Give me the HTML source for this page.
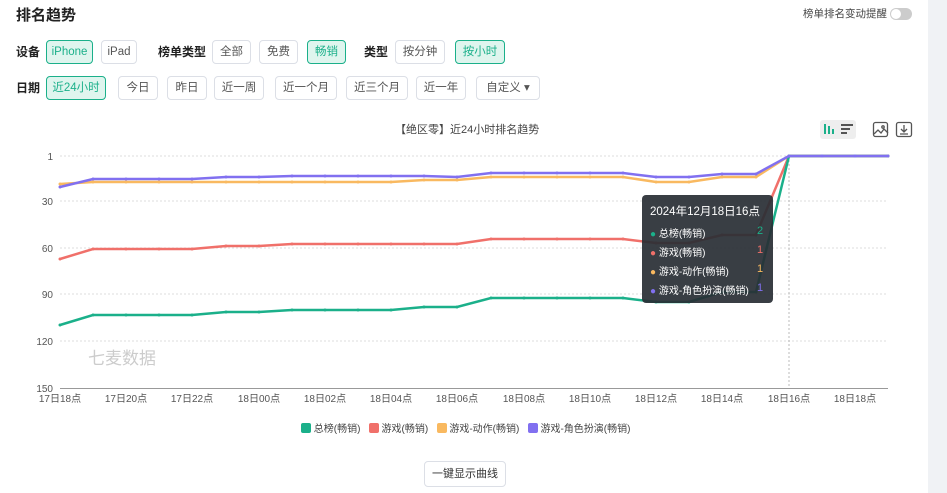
<!DOCTYPE html>
<html><head><meta charset="utf-8"><style>
*{margin:0;padding:0;box-sizing:border-box}
body{width:947px;height:493px;background:#fff;font-family:"Liberation Sans","Noto Sans CJK SC",sans-serif;position:relative;overflow:hidden;color:#333}
.gray{position:absolute;left:928px;top:0;width:19px;height:493px;background:#f0f2f5}
.title{position:absolute;left:16px;top:6px;font-size:15px;font-weight:bold;color:#222;line-height:20px}
.lbl{position:absolute;font-size:12px;font-weight:bold;color:#222;line-height:24px}
.b{position:absolute;height:24px;border:1px solid #dcdfe6;border-radius:4px;font-size:11.5px;color:#555;line-height:22px;text-align:center;background:#fff}
.b.on{background:#dff5ee;border-color:#1bb08a;color:#1bb08a}
.sw{position:absolute;left:890px;top:8px;width:22px;height:12px;border-radius:6px;background:#ccc}
.sw:after{content:"";position:absolute;left:1px;top:1px;width:10px;height:10px;border-radius:5px;background:#fff}
</style></head><body>
<div class="gray"></div>
<div class="title">排名趋势</div>
<div style="position:absolute;right:60px;top:7px;font-size:10.5px;color:#444;line-height:14px">榜单排名变动提醒</div>
<div class="sw"></div>

<div class="lbl" style="left:16px;top:40px">设备</div>
<div class="b on" style="left:46px;top:40px;width:47px">iPhone</div>
<div class="b" style="left:101px;top:40px;width:36px">iPad</div>
<div class="lbl" style="left:158px;top:40px">榜单类型</div>
<div class="b" style="left:212px;top:40px;width:39px">全部</div>
<div class="b" style="left:259px;top:40px;width:39px">免费</div>
<div class="b on" style="left:307px;top:40px;width:39px">畅销</div>
<div class="lbl" style="left:364px;top:40px">类型</div>
<div class="b" style="left:395px;top:40px;width:50px">按分钟</div>
<div class="b on" style="left:455px;top:40px;width:50px">按小时</div>

<div class="lbl" style="left:16px;top:76px">日期</div>
<div class="b on" style="left:46px;top:76px;width:60px">近24小时</div>
<div class="b" style="left:118px;top:76px;width:40px">今日</div>
<div class="b" style="left:167px;top:76px;width:40px">昨日</div>
<div class="b" style="left:214px;top:76px;width:50px">近一周</div>
<div class="b" style="left:275px;top:76px;width:62px">近一个月</div>
<div class="b" style="left:346px;top:76px;width:62px">近三个月</div>
<div class="b" style="left:416px;top:76px;width:50px">近一年</div>
<div class="b" style="left:476px;top:76px;width:64px">自定义 ▾</div>

<div style="position:absolute;left:395px;top:121px;font-size:11px;color:#444">【绝区零】近24小时排名趋势</div>
<div style="position:absolute;left:820px;top:120px;width:36px;height:19px;background:#eee;border-radius:3px"></div>
<svg style="position:absolute;left:0;top:0" width="947" height="493">
<g fill="#1bb08a"><rect x="824" y="124" width="2" height="10"/><rect x="828" y="126" width="2" height="8"/><rect x="832" y="129" width="2" height="5"/></g>
<g fill="#555"><rect x="841" y="124" width="12" height="2"/><rect x="841" y="128" width="9" height="2"/><rect x="841" y="132" width="6" height="2"/></g>
<g fill="none" stroke="#555" stroke-width="1.3"><rect x="873.5" y="122.5" width="14" height="14" rx="2"/><path d="M874 134l4-4 3 3 3-4 4 4"/><circle cx="883" cy="127" r="1.2"/>
<rect x="896.5" y="122.5" width="15" height="14" rx="2"/><path d="M904 125v7M901 129l3 3 3-3M900 134h8"/></g>
<g stroke="#ddd" stroke-dasharray="2,2" stroke-width="1">
<line x1="60" y1="156" x2="888" y2="156"/><line x1="60" y1="201" x2="888" y2="201"/><line x1="60" y1="248" x2="888" y2="248"/><line x1="60" y1="294" x2="888" y2="294"/><line x1="60" y1="341" x2="888" y2="341"/>
<line x1="789" y1="156" x2="789" y2="388" stroke="#bbb"/></g>
<line x1="60" y1="388.5" x2="888" y2="388.5" stroke="#999"/>
<g font-size="10" fill="#555" text-anchor="end"><text x="53" y="160">1</text><text x="53" y="205">30</text><text x="53" y="252">60</text><text x="53" y="298">90</text><text x="53" y="345">120</text><text x="53" y="392">150</text></g>
<g font-size="10" fill="#555" text-anchor="middle"><text x="60" y="402">17日18点</text><text x="126" y="402">17日20点</text><text x="192" y="402">17日22点</text><text x="259" y="402">18日00点</text><text x="325" y="402">18日02点</text><text x="391" y="402">18日04点</text><text x="457" y="402">18日06点</text><text x="524" y="402">18日08点</text><text x="590" y="402">18日10点</text><text x="656" y="402">18日12点</text><text x="722" y="402">18日14点</text><text x="789" y="402">18日16点</text><text x="855" y="402">18日18点</text></g>
<text x="88" y="364" font-size="17" fill="#ccc">七麦数据</text>
<g id="lines" fill="none" stroke-width="2.5"></g>
</svg>
<div style="position:absolute;left:642px;top:195px;width:131px;height:108px;background:rgba(40,46,52,0.92);border-radius:4px;color:#fff;font-size:10px;padding:10px 0 0 8px">
<div style="font-size:11.5px;margin-bottom:5px;line-height:15px">2024年12月18日16点</div>
<div style="height:19px;position:relative"><span style="color:#1bb08a">●</span> 总榜(畅销)<span style="position:absolute;left:107px;color:#1bb08a;font-size:11px">2</span></div>
<div style="height:19px;position:relative"><span style="color:#f0706a">●</span> 游戏(畅销)<span style="position:absolute;left:107px;color:#f0706a;font-size:11px">1</span></div>
<div style="height:19px;position:relative"><span style="color:#f9b960">●</span> 游戏-动作(畅销)<span style="position:absolute;left:107px;color:#f9b960;font-size:11px">1</span></div>
<div style="height:19px;position:relative"><span style="color:#8170f0">●</span> 游戏-角色扮演(畅销)<span style="position:absolute;left:107px;color:#8170f0;font-size:11px">1</span></div>
</div>
<div style="position:absolute;left:301px;top:420px;font-size:10px;color:#444;white-space:nowrap">
<span style="display:inline-block;width:10px;height:10px;border-radius:2px;background:#1bb08a;vertical-align:-1px"></span> 总榜(畅销) &nbsp; <span style="display:inline-block;width:10px;height:10px;border-radius:2px;background:#f0706a;vertical-align:-1px"></span> 游戏(畅销) &nbsp; <span style="display:inline-block;width:10px;height:10px;border-radius:2px;background:#f9b960;vertical-align:-1px"></span> 游戏-动作(畅销) &nbsp; <span style="display:inline-block;width:10px;height:10px;border-radius:2px;background:#8170f0;vertical-align:-1px"></span> 游戏-角色扮演(畅销)</div>
<div class="b" style="left:424px;top:461px;width:82px;height:26px;line-height:24px;font-size:11px;color:#333">一键显示曲线</div>
<script>
var xs=[60,93,126,159,192,226,259,292,325,358,391,424,457,491,524,557,590,623,656,689,722,756,789,822,855,888];
var T=[156,156,156];
var d={
"#f9b960":[184,182,182,182,182,182,182,182,182,182,182,180,180,177,177,177,177,177,182,182,177,177].concat([156],T),
"#f0706a":[259,249,249,249,249,246,246,244,244,244,244,244,244,239,239,239,239,239,243,243,235,235].concat([156],T),
"#1bb08a":[325,315,315,315,315,312,312,310,310,310,310,307,307,298,298,298,298,298,302,302,292,292].concat([156],T),
"#8170f0":[187,179,179,179,179,177,177,176,176,176,176,176,177,173,173,173,173,173,177,177,174,174].concat([156],T)};
var g=document.getElementById('lines'),h='';
for(var c in d){var p=d[c].map(function(y,i){return xs[i]+','+y}).join(' ');
h+='<polyline points="'+p+'" stroke="'+c+'"/>';
d[c].forEach(function(y,i){h+='<circle cx="'+xs[i]+'" cy="'+y+'" r="1.5" fill="'+c+'" stroke="none"/>'});}
g.innerHTML=h;
</script>
</body></html>
